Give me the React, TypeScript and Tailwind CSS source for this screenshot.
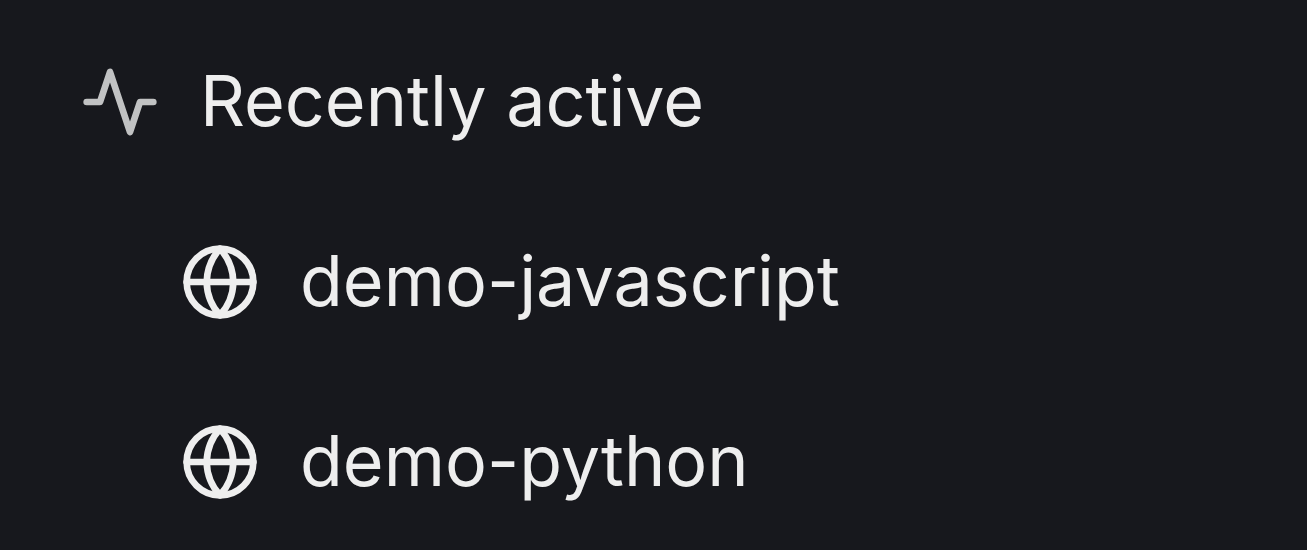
import React from "react";

const projects = ["demo-javascript", "demo-python"];

function Icon({ className, children }: { className: string; children: React.ReactNode }) {
  return (
    <svg
      aria-hidden="true"
      viewBox="0 0 24 24"
      fill="none"
      stroke="currentColor"
      strokeWidth={2}
      strokeLinecap="round"
      strokeLinejoin="round"
      className={className}
    >
      {children}
    </svg>
  );
}

export default function App() {
  return (
    <nav
      aria-label="Projects"
      className="min-h-screen bg-[#17181d] pt-3 font-['Inter',sans-serif] text-[70px] leading-[88px] text-[#eeeeee]"
    >
      <section>
        <h2 className="flex h-[180px] items-center gap-10 pl-20 font-normal">
          <Icon className="size-20 shrink-0 text-[#c1c2c3]">
            <polyline points="22 12 18 12 15 21 9 3 6 12 2 12" />
          </Icon>
          <span className="pb-0.5">Recently active</span>
        </h2>
        <ul>
          {projects.map((name) => (
            <li key={name}>
              <a href="#" className="flex h-[180px] items-center gap-10 pl-[180px]">
                <Icon className="size-20 shrink-0">
                  <circle cx="12" cy="12" r="10" />
                  <line x1="2" y1="12" x2="22" y2="12" />
                  <path d="M12 2a15.3 15.3 0 0 1 4 10 15.3 15.3 0 0 1-4 10 15.3 15.3 0 0 1-4-10 15.3 15.3 0 0 1 4-10z" />
                </Icon>
                <span className="pb-0.5">{name}</span>
              </a>
            </li>
          ))}
        </ul>
      </section>
    </nav>
  );
}
